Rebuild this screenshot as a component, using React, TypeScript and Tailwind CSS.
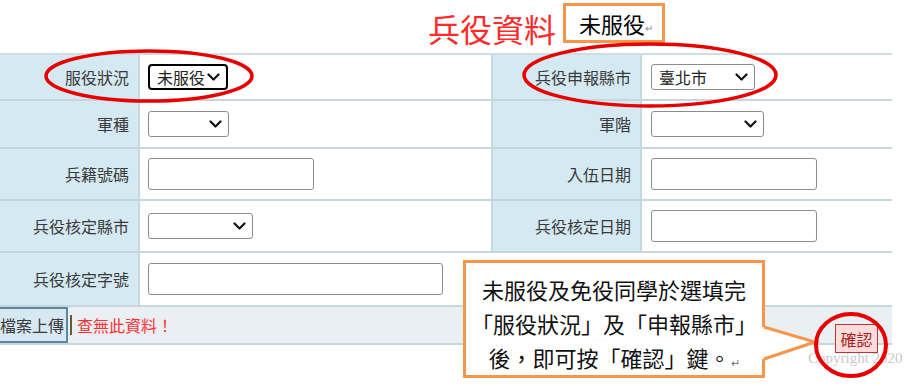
import React from 'react';

const FONT = "font-['Noto_Sans_CJK_TC','Noto_Sans_CJK_JP',sans-serif]";

function Chevron() {
  return (
    <svg width="13" height="8" viewBox="0 0 13 8" className="shrink-0">
      <path d="M1.5 1.5 L6.5 6.5 L11.5 1.5" fill="none" stroke="#111" strokeWidth="2.2" strokeLinecap="round" strokeLinejoin="round" />
    </svg>
  );
}

function FakeSelect({ width, value, focused }: { width: string; value?: string; focused?: boolean }) {
  return (
    <div
      className={`${width} h-[26px] flex items-center justify-between pl-[7px] pr-[6px] bg-white ${
        focused ? 'border-2 border-black rounded-[4px]' : 'border border-[#8d8d8d] rounded-[3px]'
      }`}
    >
      <span className="text-[16px] leading-none text-[#222]">{value}</span>
      <Chevron />
    </div>
  );
}

function TextBox({ width }: { width: string }) {
  return <div className={`${width} h-[32px] bg-white border border-[#8d8d8d] rounded-[3px]`} />;
}

function Label({ text, second }: { text: string; second?: boolean }) {
  return (
    <div
      className={`bg-[#d4e9f2] flex items-center justify-end pr-[9px] text-[16px] text-[#3a3a3a] border-r-2 border-[#c3d8e0] ${
        second ? 'border-l-2' : ''
      }`}
    >
      {text}
    </div>
  );
}

function Value({ children, second }: { children?: React.ReactNode; second?: boolean }) {
  return <div className={`flex items-center ${second ? 'pl-[9px]' : 'pl-[8px]'}`}>{children}</div>;
}

const rowCls = 'grid grid-cols-[140px_351px_151px_250px] border-b-2 border-[#c5d6dc]';

export default function App() {
  return (
    <div className={`relative w-[907px] h-[386px] overflow-hidden bg-white ${FONT}`}>
      {/* header */}
      <div className="h-[53px] flex items-start pl-[428px]">
        <span className="mt-[10px] text-[32px] leading-[36px] text-[#ff2b2b]">兵役資料</span>
        <div className="ml-[7px] mt-[3px] h-[40px] w-[102px] border-[3px] border-[#f7964a] flex items-center pl-[13px]">
          <span className="text-[22px] leading-none text-black">未服役</span>
          <span className="text-[10px] text-[#888] mt-[8px]">↵</span>
        </div>
      </div>

      {/* table */}
      <div className="w-[892px] border-t-2 border-[#d0dee2]">
        <div className={`${rowCls} h-[46px]`}>
          <Label text="服役狀況" />
          <Value>
            <FakeSelect width="w-[80px]" value="未服役" focused />
          </Value>
          <Label text="兵役申報縣市" second />
          <Value second>
            <FakeSelect width="w-[104px]" value="臺北市" />
          </Value>
        </div>
        <div className={`${rowCls} h-[48px]`}>
          <Label text="軍種" />
          <Value>
            <FakeSelect width="w-[81px]" />
          </Value>
          <Label text="軍階" second />
          <Value second>
            <FakeSelect width="w-[113px]" />
          </Value>
        </div>
        <div className={`${rowCls} h-[52px]`}>
          <Label text="兵籍號碼" />
          <Value>
            <TextBox width="w-[166px]" />
          </Value>
          <Label text="入伍日期" second />
          <Value second>
            <TextBox width="w-[166px]" />
          </Value>
        </div>
        <div className={`${rowCls} h-[52px]`}>
          <Label text="兵役核定縣市" />
          <Value>
            <div className="h-[28px] flex items-center">
              <FakeSelect width="w-[105px]" />
            </div>
          </Value>
          <Label text="兵役核定日期" second />
          <Value second>
            <TextBox width="w-[166px]" />
          </Value>
        </div>
        <div className={`${rowCls} h-[54px]`}>
          <Label text="兵役核定字號" />
          <div className="col-span-3 flex items-center pl-[8px]">
            <TextBox width="w-[295px]" />
          </div>
        </div>
        {/* footer row */}
        <div className="h-[38px] flex items-center bg-[#e9eff2] border-b-2 border-[#c5d6dc]">
          <div className="-ml-[8px] h-full flex items-center bg-[#d6e9f2] border-2 border-[#5b87a1] pl-[6px] pr-[2px] text-[16px] text-[#3a3a3a]">
            檔案上傳
          </div>
          <span className="ml-[2px] w-[2px] h-[20px] bg-[#6a5a30]" />
          <span className="ml-[5px] text-[16px] text-[#ff3030]">查無此資料！</span>
        </div>
      </div>

      {/* copyright under button */}
      <div className="pl-[808px] pt-[2px] whitespace-nowrap font-['Liberation_Serif',serif] text-[15px] text-[#c9c9c9]">
        Copyright 2020
      </div>

      {/* confirm button */}
      <div className="absolute left-[835px] top-[324px] w-[43px] h-[29px] flex items-center justify-center bg-[#ffdcdc] border border-[#b43838] text-[16px] text-[#a52626]">
        確認
      </div>

      {/* callout */}
      <div className="absolute left-[463px] top-[260px] w-[302px] h-[118px] bg-white border-[3px] border-[#f7964a] pt-[9px] flex flex-col items-center text-[22px] leading-[34px] text-[#111]">
        <span>未服役及免役同學於選填完</span>
        <span>「服役狀況」及「申報縣市」</span>
        <span>
          後，即可按「確認」鍵。<span className="text-[11px] text-[#777]">↵</span>
        </span>
      </div>
      <svg className="absolute left-[760px] top-[320px] pointer-events-none" width="60" height="46">
        <polygon points="0,7 5,7 55,22 5,39 0,39" fill="white" />
        <polyline points="4,7 55,22 4,39" fill="none" stroke="#f7964a" strokeWidth="3" strokeLinejoin="miter" />
      </svg>

      {/* red marks */}
      <svg className="absolute left-0 top-0 pointer-events-none" width="907" height="386">
        <ellipse cx="149" cy="76" rx="103" ry="25" fill="none" stroke="#e80000" strokeWidth="3.5" />
        <ellipse cx="650" cy="75" rx="126" ry="31" fill="none" stroke="#e80000" strokeWidth="3.5" />
        <ellipse cx="851" cy="345" rx="35" ry="31" fill="none" stroke="#e80000" strokeWidth="4" />
      </svg>
    </div>
  );
}
